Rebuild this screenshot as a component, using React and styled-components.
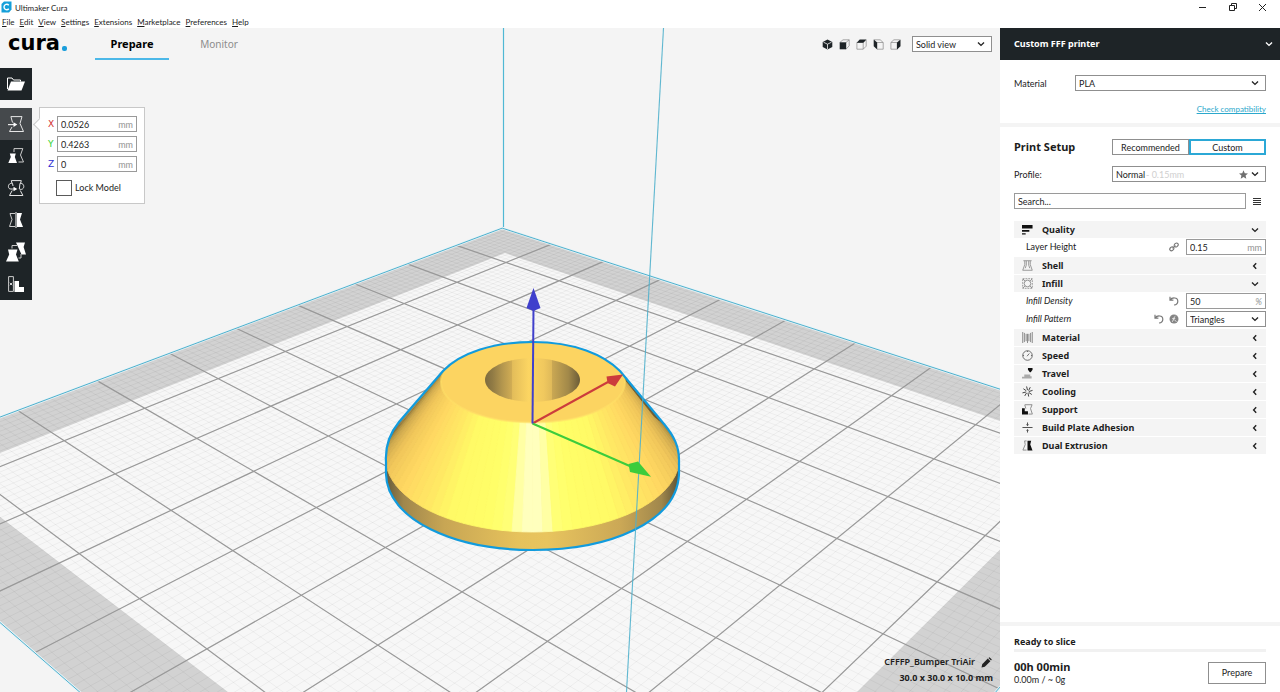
import React, { useState } from "react";
import styled, { createGlobalStyle } from "styled-components";

const GlobalStyle = createGlobalStyle`
	* {
		box-sizing: border-box;
	}
	html,
	body,
	#root {
		height: 100%;
		margin: 0;
	}
	body,
	button,
	input,
	select {
		font-family: Lato, "Noto Sans", sans-serif;
		font-size: 9px;
		line-height: 12px;
		color: #1c1c1c;
	}
	button,
	input,
	select {
		margin: 0;
		padding: 0;
		border: 0;
		background: none;
		border-radius: 0;
	}
	svg {
		display: block;
		flex: none;
	}
`;

// Window frame
const Window = styled.div`
	display: flex;
	flex-direction: column;
	height: 100vh;
	background: #fff;
	overflow: hidden;
`;

const TitleBar = styled.header`
	display: flex;
	align-items: center;
	height: 14px;
	padding: 0 12px 0 1px;
	gap: 3px;
`;

const WindowTitle = styled.span`
	flex: 1;
	padding-top: 2px;
	font-size: 8px;
`;

const WindowControls = styled.div`
	display: flex;
	gap: 18px;
`;

const WindowButton = styled.button`
	width: 12px;
	height: 12px;
`;

const MenuBar = styled.nav`
	display: flex;
	align-items: center;
	height: 14px;
	padding: 2px 2px 0;
	gap: 5px;
`;

const MenuItem = styled.button`
	font-size: 8px;

	&::first-letter {
		text-decoration: underline;
	}
`;

const Main = styled.div`
	flex: 1;
	display: flex;
	min-height: 0;
`;

// 3D view
const Viewport = styled.main`
	position: relative;
	flex: 1;
	min-width: 0;
	display: flex;
	flex-direction: column;
	background: #f4f4f4;
	overflow: hidden;
`;

const SceneSvg = styled.svg`
	position: absolute;
	inset: 0;
	width: 100%;
	height: 100%;
`;

const TopBar = styled.div`
	position: relative;
	display: flex;
	align-items: center;
	height: 32px;
	padding: 0 8px;
`;

const Logo = styled.div`
	display: flex;
	align-items: center;
	width: 87px;
	font-family: "DejaVu Sans", sans-serif;
	font-size: 21px;
	line-height: 24px;
	font-weight: 700;
	color: #000;
	height: 32px;
	padding-bottom: 2px;
`;

const LogoDot = styled.span`
	width: 5px;
	height: 5px;
	margin: 10px 0 0 2px;
	border-radius: 2px;
	background: #1b9edb;
`;

const Tab = styled.button`
	width: 74px;
	height: 32px;
	margin-right: 13px;
	padding-top: 2px;
	border-bottom: 2px solid ${(props) => (props.$active ? "#4cb8e8" : "transparent")};
	font-family: "Noto Sans", sans-serif;
	font-size: ${(props) => (props.$active ? "11px" : "10px")};
	font-weight: ${(props) => (props.$active ? 700 : 400)};
	color: ${(props) => (props.$active ? "#000" : "#8c8c8c")};
`;

const CameraButtons = styled.div`
	display: flex;
	gap: 5px;
	margin: 0 11px 0 auto;
`;

const CameraButton = styled.button`
	width: 12px;
	height: 12px;
	display: flex;
	align-items: center;
	justify-content: center;
`;

const Workspace = styled.div`
	position: relative;
	flex: 1;
	display: flex;
	align-items: flex-start;
	padding-top: 8px;
	gap: 7px;
`;

const Toolbar = styled.div`
	display: flex;
	flex-direction: column;
	gap: 8px;
`;

const ToolGroup = styled.div`
	display: flex;
	flex-direction: column;
	background: #1e2427;
`;

const ToolButton = styled.button`
	display: flex;
	align-items: center;
	justify-content: center;
	width: 32px;
	height: 32px;
	background: ${(props) => (props.$active ? "#45494c" : "transparent")};
`;

const ToolPanel = styled.form`
	position: relative;
	width: 106px;
	margin-top: 39px;
	padding: 8px 8px 7px;
	border: 1px solid #c8c8c8;
	background: #fff;
	display: flex;
	flex-direction: column;
	gap: 4px;

	&::before {
		content: "";
		position: absolute;
		left: -5px;
		top: 12px;
		width: 8px;
		height: 8px;
		border-left: 1px solid #c8c8c8;
		border-bottom: 1px solid #c8c8c8;
		background: #fff;
		transform: rotate(45deg);
	}
`;

const AxisRow = styled.label`
	display: grid;
	grid-template-columns: 9px 80px;
	align-items: center;
	font-family: "DejaVu Sans", sans-serif;
	color: ${(props) => props.$color};
`;

const CheckRow = styled.label`
	display: flex;
	align-items: center;
	gap: 3px;
	margin: 4px 0 0 8px;

	input {
		appearance: none;
		width: 16px;
		height: 16px;
		border: 1px solid #5a5a5a;
		background: #fff;
	}
`;

const ModelInfo = styled.div`
	position: relative;
	align-self: flex-end;
	margin-left: auto;
	padding: 0 7px 7px 0;
	display: flex;
	flex-direction: column;
	align-items: flex-end;
	gap: 2px;
	font-family: "Noto Sans", sans-serif;
	font-weight: 700;
	line-height: 14px;
`;

const JobName = styled.button`
	display: flex;
	align-items: center;
	gap: 6px;
	padding-right: 1px;
	font-family: inherit;
	font-weight: 600;
	line-height: 14px;
`;

// Form fields shared by both sides
const Field = styled.span`
	display: flex;
	align-items: center;
	height: 16px;
	padding: 1px 3px 0;
	border: 1px solid #9a9a9a;
	background: #fff;

	input {
		flex: 1;
		min-width: 0;
		outline: none;
	}
	input::placeholder {
		color: #1c1c1c;
		opacity: 1;
	}
`;

const Unit = styled.span`
	font-family: Lato, sans-serif;
	color: #929292;
`;

const SelectWrap = styled.span`
	position: relative;
	display: flex;
	height: 16px;
	width: ${(props) => props.$width || "auto"};

	select {
		appearance: none;
		flex: 1;
		min-width: 0;
		padding: 1px 3px 0;
		border: 1px solid #8f8f8f;
		background: #fff;
	}
`;

const SelectIcons = styled.span`
	position: absolute;
	right: 7px;
	top: 4px;
	display: flex;
	gap: 3px;
	pointer-events: none;
`;

const SelectHint = styled.span`
	position: absolute;
	left: 34px;
	top: 3px;
	color: #cfcfcf;
	pointer-events: none;
`;

// Sidebar
const Sidebar = styled.aside`
	width: 280px;
	display: flex;
	flex-direction: column;
	background: #fff;
`;

const Bold = styled.span`
	display: block;
	font-family: "Noto Sans", sans-serif;
	font-size: ${(props) => props.$size || "9px"};
	line-height: 14px;
	font-weight: 700;
`;

const MachineButton = styled.button`
	display: flex;
	align-items: center;
	justify-content: space-between;
	height: 32px;
	padding: 0 7px 0 14px;
	background: #1e2427;
	color: #fff;
`;

const MaterialSection = styled.section`
	display: flex;
	flex-direction: column;
	gap: 12px;
	padding: 15px 14px 8px;
	border-bottom: 4px solid #f4f4f4;
`;

const Row = styled.div`
	display: grid;
	grid-template-columns: ${(props) => props.$label} 1fr;
	align-items: center;
`;

const RowLabel = styled.span`
	padding-top: 1px;
`;

const CheckLink = styled.a`
	align-self: flex-end;
	font-size: 8px;
	color: #2ba8cc;
`;

const SetupSection = styled.section`
	flex: 1;
	display: flex;
	flex-direction: column;
	gap: 11px;
	padding: 12px 14px;
`;

const ModeSwitch = styled.div`
	display: grid;
	grid-template-columns: 1fr 1fr;
`;

const ModeButton = styled.button`
	height: 16px;
	border: ${(props) => (props.$active ? "2px solid #2ba8d6" : "1px solid #8f8f8f")};
	line-height: 11px;
`;

const SearchRow = styled.div`
	display: grid;
	grid-template-columns: 1fr 13px;
	gap: 7px;
	align-items: center;
`;

const MenuButton = styled.button`
	display: grid;
	gap: 1px;
	width: 8px;

	span {
		height: 1px;
		background: #333;
	}
`;

const SettingList = styled.div`
	display: flex;
	flex-direction: column;
	margin-top: 1px;
`;

const Category = styled.button`
	display: grid;
	grid-template-columns: 12px 1fr 8px;
	gap: 8px;
	align-items: center;
	height: 17px;
	margin-bottom: 1px;
	padding: 0 7px 0 8px;
	background: #f4f4f4;
	text-align: left;
`;

const Setting = styled.div`
	display: grid;
	grid-template-columns: 1fr auto 80px;
	gap: 7px;
	align-items: center;
	height: 18px;
	padding: 0 0 2px 12px;
	font-style: ${(props) => (props.$changed ? "italic" : "normal")};
`;

const SettingIcons = styled.span`
	display: flex;
	gap: 5px;
`;

const JobSection = styled.footer`
	padding: 9px 14px 7px;
	border-top: 4px solid #f4f4f4;
`;

const ProgressTrack = styled.div`
	height: 3px;
	margin-bottom: 8px;
	background: #f1f1f1;
`;

const JobRow = styled.div`
	display: flex;
	justify-content: space-between;
	align-items: center;
`;

const JobStats = styled.div`
	display: flex;
	flex-direction: column;
	line-height: 11px;
`;

const PrepareButton = styled.button`
	width: 58px;
	height: 22px;
	border: 1px solid #8f8f8f;
`;

// Icons
const Chevron = ({ color = "#222", left }) => (
	<svg width="8" height="8" viewBox="0 0 8 8" fill="none" stroke={color} strokeWidth="1.4">
		<path d={left ? "M5.2 1.2 2.6 4l2.6 2.8" : "M1 2.6 4 5.4l3-2.8"} />
	</svg>
);

const AppIcon = () => (
	<svg width="11" height="12" viewBox="0 0 11 12">
		<path d="M3 0.5h7.5v8L8 11.5H0.5V3z" fill="#159fd9" />
		<path d="M7.8 4.2C6.4 2.6 3 3 3 6s3.4 3.4 4.8 1.8" fill="none" stroke="#fff" strokeWidth="1.4" />
	</svg>
);

const Pencil = () => (
	<svg width="11" height="11" viewBox="0 0 11 11" fill="#222">
		<path d="M0.5 10.5 1.2 7.2 6.8 1.6 9.4 4.2 3.8 9.8zM7.5 1 8.5 0.2 10.8 2.4 10 3.5z" />
	</svg>
);

const Undo = () => (
	<svg width="10" height="10" viewBox="0 0 10 10" fill="none" stroke="#777" strokeWidth="1.2">
		<path d="M1 0.8v3.4h3.4M1.2 4C2.8 1.2 8.8 1 8.8 5.2c0 2.2-1.6 3.6-3.8 3.8" />
	</svg>
);

const LinkIcon = () => (
	<svg width="10" height="10" viewBox="0 0 10 10" fill="none" stroke="#777" strokeWidth="1.1">
		<ellipse cx="2.8" cy="6.8" rx="2.2" ry="1.7" transform="rotate(-40 2.8 6.8)" />
		<ellipse cx="7.2" cy="3" rx="2.2" ry="1.7" transform="rotate(-40 7.2 3)" />
		<path d="M3.4 6.200 6.600 3.600" />
	</svg>
);

const FormulaIcon = () => (
	<svg width="10" height="10" viewBox="0 0 10 10">
		<circle cx="5" cy="5" r="4.5" fill="#858585" />
		<path d="M3 7.8c1.5 0 1.6-5.6 3.4-5.6M3.2 4.6h3M5.4 5.6l2 2.2" stroke="#e4e4e4" fill="none" />
	</svg>
);

const Star = () => (
	<svg width="9" height="9" viewBox="0 0 10 10" fill="#6f6f6f">
		<path d="M5 0.2 6.4 3.5 10 3.8 7.3 6.2 8.1 9.7 5 7.8 1.9 9.7 2.7 6.2 0 3.8 3.6 3.5z" />
	</svg>
);

const cameraViews = {
	"3D View": (
		<g>
			<path d="M5.5 0.5 10.3 2.9v5.2L5.5 10.5 0.7 8.1V2.9z" fill="#1e2427" />
			<path d="M1.5 3.2l4 2 4-2M5.5 5.2V10" stroke="#f4f4f4" strokeWidth="0.8" fill="none" />
		</g>
	),
	"Front View": (
		<g>
			<path d="M0.8 3.5 4 0.8h6.2v6L7 10.2M7 3.5 10.2 0.8" stroke="#888" strokeWidth="0.7" fill="none" />
			<path d="M0.7 3.3h6.5v7H0.7z" fill="#1e2427" />
		</g>
	),
	"Top View": (
		<g>
			<path d="M0.9 3.5h6.3v6.7H0.9zM7.2 10.2l3-3V0.8" stroke="#888" strokeWidth="0.7" fill="none" />
			<path d="M0.7 3.7 3.7 0.5h6.8L7.4 3.7z" fill="#1e2427" />
		</g>
	),
	"Left View": (
		<g>
			<path d="M1 0.8h6.2l3 2.7v6.7H4M4 3.5h6.2" stroke="#888" strokeWidth="0.7" fill="none" />
			<path d="M0.7 0.5 4.2 3.5v7L0.7 7.2z" fill="#1e2427" />
		</g>
	),
	"Right View": (
		<g>
			<path d="M0.9 3.5h6.3v6.7H0.9zM0.9 3.5l3-2.7h6" stroke="#888" strokeWidth="0.7" fill="none" />
			<path d="M7 3.5 10.5 0.5v6.7L7 10.5z" fill="#1e2427" />
		</g>
	),
};

const tools = [
	{
		name: "Move",
		icon: (
			<g fill="none" stroke="#e6e6e6">
				<path d="M4.5 6.5 2.9 0.6H14L12 7.5l3.500 8H1.500l2.500-4.500" />
				<path d="M0 8.600h6" strokeWidth="1.200" />
				<path d="M5.500 6.300 9.300 8.600 5.500 10.900z" fill="#fff" stroke="none" />
			</g>
		),
	},
	{
		name: "Scale",
		icon: (
			<g>
				<path d="M6 4V0.6H14.8L12.5 7l3 7H10.500" fill="none" stroke="#ccc" />
				<path d="M1.800 5.500H7.800L6.800 9 9 15H0.300L2.800 9z" fill="#fff" />
			</g>
		),
	},
	{
		name: "Rotate",
		icon: (
			<g fill="none" stroke="#e6e6e6">
				<path d="M4 3.2 3.3 0.6H13.3L12.600 3.200M12.300 10.500l2.600 5H1.500L4.200 10.500" />
				<path d="M4.500 3.300C1 2.800-0.500 6 1 8.300 1.800 9.300 3.500 9 6 9M4.500 3.300 5 6M12 3.300c3.500-0.300 4.500 3 3.300 4.900-1 1.500-2.800 1.300-3.800 1M12 3.300 11.300 9" />
				<path d="M5.500 6.800 9.300 9 5.500 11.200z" fill="#fff" stroke="none" />
			</g>
		),
	},
	{
		name: "Mirror",
		icon: (
			<g>
				<path d="M7 1.500H2L4 7.500 1.500 14.500H7" fill="none" stroke="#ccc" />
				<path d="M8 0v16" stroke="#fff" />
				<path d="M9 1H14L12 7.500 15 15H9z" fill="#fff" />
			</g>
		),
	},
	{
		name: "Per Model Settings",
		icon: (
			<g>
				<path d="M8-1.500H17L15.600 3 18 10.500H13.500L10.500 4z" fill="#fff" />
				<path d="M4 4.500V1.500H9M13 10V14H10.500" fill="none" stroke="#ccc" />
				<path d="M0 5.500H9.500L8 10.500 10.800 17.500H-2L1.200 10.500z" fill="#fff" />
			</g>
		),
	},
	{
		name: "Support Blocker",
		icon: (
			<g>
				<path d="M0.600 0.600H5.400V15.400H0.600z" fill="none" stroke="#ccc" />
				<path d="M1.800 6.800l2.400 2.400M4.200 6.800 1.800 9.200" stroke="#fff" strokeWidth="0.800" />
				<path d="M6.500 5h4.500v6H16v5H6.500z" fill="#fff" />
			</g>
		),
	},
];

const categoryIcons = {
	Quality: <path d="M0 1h11.500v4H0zM0 6.500h8v2H0zM0 10h4v1.500H0z" fill="#111" />,
	Shell: (
		<g fill="none" stroke="#888" strokeWidth="0.9">
			<path d="M1.5 0.8h9M3 1v4L0.8 11.2h10.4L9 5V1M4.7 1v4.5L3.5 9M7.3 1v4.5L8.5 9" />
		</g>
	),
	Infill: (
		<g fill="none" stroke="#777" strokeWidth="0.8">
			<path d="M0.8 0.8h10.4v10.4H0.8z" strokeDasharray="2 1" />
			<circle cx="6" cy="6" r="3.600" />
			<path d="M1 1l2.500 2.500M11 1 8.500 3.500M1 11l2.500-2.500M11 11 8.500 8.500" />
		</g>
	),
	Material: (
		<path d="M0.8 0v12M2.6 1v10M4.5 2v8M6 2v10M7.5 2v8M9.4 1v10M11.2 0v12" fill="none" stroke="#777" strokeWidth="0.9" />
	),
	Speed: (
		<g fill="none" stroke="#555" strokeWidth="0.9">
			<circle cx="6" cy="6" r="5.2" />
			<path d="M5.5 6.8 8 3.8M6 1v1.2M1 6h1.2M9.8 6H11" />
		</g>
	),
	Travel: (
		<g>
			<path d="M6.5 0h5v2L9.5 4.5h-1L6.5 2z" fill="#111" />
			<path d="M2.500 7H9v2h1.500v2.500H0V9.500h2.500z" fill="#aaa" />
		</g>
	),
	Cooling: (
		<g fill="none" stroke="#333" strokeWidth="1">
			<path d="M6 4.500 5 0.500M7.200 5 9 1.300M7.500 6l4-1.200M7.300 7l3.400 2.300M6.500 7.500 7.300 11.500M5 7.500 3 10.800M4.500 6.500.5 7.500M4.700 5.200 1.500 3" />
		</g>
	),
	Support: (
		<g>
			<path d="M3 0.8h8L9.3 5l2 6H7M3 1l1.2 4" fill="none" stroke="#888" />
			<path d="M0 4.500h3V8h3.500v3.500H0z" fill="#111" />
		</g>
	),
	"Build Plate Adhesion": (
		<g fill="none" stroke="#444">
			<path d="M0.5 6h11M6 0.5V3M6 9v2.500" />
			<path d="M4.500 2.500h3L6 4.500zM4.500 9.500h3L6 7.500z" fill="#444" stroke="none" />
		</g>
	),
	"Dual Extrusion": (
		<g>
			<path d="M5 1H2.800L3.500 5 1 11h4" fill="none" stroke="#888" />
			<path d="M6 0.8h4L9 5l2.500 6.500H6z" fill="#111" />
		</g>
	),
};

// Build plate: ten cells each way, seen in perspective
const plateQuad = [
	[506, 262.5],
	[975.7, 424.7],
	[561, 764.5],
	[64.3, 440.7],
];

// Maps cell coordinates (a down the left side, b down the right side) to the screen
const makeProjection = ([p0, p1, p2, p3]) => {
	const dx1 = p1[0] - p2[0];
	const dx2 = p3[0] - p2[0];
	const dy1 = p1[1] - p2[1];
	const dy2 = p3[1] - p2[1];
	const sx = p0[0] - p1[0] + p2[0] - p3[0];
	const sy = p0[1] - p1[1] + p2[1] - p3[1];
	const den = dx1 * dy2 - dx2 * dy1;
	const g = (sx * dy2 - dx2 * sy) / den;
	const h = (dx1 * sy - sx * dy1) / den;
	return (a, b) => {
		const u = (b - 1) / 7;
		const v = (a - 1) / 7;
		const w = g * u + h * v + 1;
		return [0, 1].map((i) =>
			(((p1[i] - p0[i] + g * p1[i]) * u + (p3[i] - p0[i] + h * p3[i]) * v + p0[i]) / w).toFixed(2)
		);
	};
};

const project = makeProjection(plateQuad);
const line = (a1, b1, a2, b2) => `M${project(a1, b1)}L${project(a2, b2)}`;
const quad = (min, max) =>
	`M${project(min, min)}L${project(min, max)}L${project(max, max)}L${project(max, min)}Z`;

const gridLines = (step) => {
	let d = "";
	for (let i = 0; i <= 10 / step; i++) {
		const t = i * step;
		d += line(t, 0, t, 10) + line(0, t, 10, t);
	}
	return d;
};

// Shade of the cone wall by angle away from the viewer
const wallShades = [
	[0, [255, 255, 196]],
	[5, [255, 255, 178]],
	[9, [255, 255, 120]],
	[16, [255, 255, 104]],
	[34, [255, 250, 102]],
	[46, [255, 232, 100]],
	[62, [255, 216, 98]],
	[80, [240, 198, 90]],
	[96, [204, 168, 78]],
	[110, [150, 124, 64]],
	[125, [100, 84, 50]],
];

const wallColor = (angle) => {
	const t = Math.abs(angle);
	const i = Math.max(1, wallShades.findIndex(([stop]) => stop >= t));
	const [t0, c0] = wallShades[i - 1];
	const [t1, c1] = wallShades[i];
	const k = (t - t0) / (t1 - t0);
	return `rgb(${c0.map((c, n) => Math.round(c + (c1[n] - c) * k)).join(",")})`;
};

const onEllipse = (cx, cy, rx, ry, angle) => {
	const t = (angle * Math.PI) / 180;
	return `${(cx + rx * Math.sin(t)).toFixed(2)},${(cy + ry * Math.cos(t)).toFixed(2)}`;
};

const WALL_STEP = 4;
const wallFacets = [];
for (let angle = -124; angle < 124; angle += WALL_STEP) {
	wallFacets.push({
		color: wallColor(angle + WALL_STEP / 2),
		points: [
			onEllipse(533, 382, 92, 40, angle),
			onEllipse(533, 382, 92, 40, angle + WALL_STEP),
			onEllipse(532.5, 458, 147, 74, angle + WALL_STEP),
			onEllipse(532.5, 458, 147, 74, angle),
		].join(" "),
	});
}

const bodyOutline =
	"M533 342C575 342 604 355 620 371L664 424C674 436 679.5 447 679 462V474C677 522 610 550 533 550C455 550 387 520 386 474V462C385 447 390 433 399 422L443 371C460 353 493 342 533 342Z";

const Scene = () => (
	<SceneSvg viewBox="0 28 1000 664" preserveAspectRatio="xMidYMid slice" aria-label="Build plate">
		<defs>
			<clipPath id="body">
				<path d={bodyOutline} />
			</clipPath>
			<linearGradient id="rim">
				<stop offset="0" stopColor="#665a3a" />
				<stop offset="0.06" stopColor="#a0874c" />
				<stop offset="0.2" stopColor="#c8a654" />
				<stop offset="0.45" stopColor="#e6c25c" />
				<stop offset="0.55" stopColor="#e8c45e" />
				<stop offset="0.8" stopColor="#cba856" />
				<stop offset="0.94" stopColor="#a0874c" />
				<stop offset="1" stopColor="#5c5236" />
			</linearGradient>
			<linearGradient id="hole">
				<stop offset="0" stopColor="#7d6b3e" />
				<stop offset="0.08" stopColor="#917b45" />
				<stop offset="0.18" stopColor="#b3964e" />
				<stop offset="0.28" stopColor="#d0ac54" />
				<stop offset="0.29" stopColor="#e3bd5a" />
				<stop offset="0.46" stopColor="#fcd562" />
				<stop offset="0.62" stopColor="#f0c85e" />
				<stop offset="0.7" stopColor="#e0ba5a" />
				<stop offset="0.71" stopColor="#c9a753" />
				<stop offset="0.88" stopColor="#a18849" />
				<stop offset="1" stopColor="#6b5c38" />
			</linearGradient>
		</defs>

		<path d={quad(0, 10)} fill="#d2d2d2" />
		<path d={quad(0.74, 9.2)} fill="#f7f7f7" />
		<path d={gridLines(0.1)} stroke="#000" strokeOpacity="0.06" strokeWidth="0.8" />
		<path d={gridLines(1)} stroke="#999" strokeWidth="1.2" />
		<path d={quad(0, 10)} fill="none" stroke="#e8f4f8" strokeWidth="2.5" />
		<path d={quad(0, 10)} fill="none" stroke="#4fb0cc" strokeWidth="1" />
		<path d="M503.5 28V227" stroke="#4fb8d4" strokeWidth="1.2" />

		<g clipPath="url(#body)">
			<path d={bodyOutline} fill="url(#rim)" />
			{wallFacets.map((facet) => (
				<polygon key={facet.points} points={facet.points} fill={facet.color} stroke={facet.color} strokeWidth="0.8" />
			))}
			<ellipse cx="533" cy="382" rx="92" ry="40.5" fill="#fcd461" stroke="#ffe067" strokeOpacity="0.6" strokeWidth="2" />
			<ellipse cx="532.5" cy="380" rx="47.5" ry="22" fill="url(#hole)" />
		</g>
		<path d={bodyOutline} fill="none" stroke="#119bdd" strokeWidth="2.2" />
		<path d="M663.5 28 626.5 692" stroke="#4fb0cc" strokeOpacity="0.9" strokeWidth="1.1" />

		<g fill="none" strokeWidth="2">
			<path d="M532.5 423.5 608 382" stroke="#cc3c3c" />
			<path d="M532.5 423.5 632 467" stroke="#3ccc3c" />
			<path d="M532.5 423.5 533.5 308" stroke="#4040cc" />
		</g>
		<path d="M606.5 376.5 623 374.5 615 386.5 607.5 383z" fill="#cc3c3c" />
		<path d="M638 461.5 651 476.7 630 472 628.5 464z" fill="#3ccc3c" />
		<path d="M533.5 288 540.5 308 533.5 311 526.5 308z" fill="#4040cc" />
	</SceneSvg>
);

const Select = ({ label, options, width, hint, star }) => (
	<SelectWrap $width={width}>
		<select aria-label={label}>
			{options.map((option) => (
				<option key={option}>{option}</option>
			))}
		</select>
		{hint && <SelectHint>{hint}</SelectHint>}
		<SelectIcons>
			{star && <Star />}
			<Chevron />
		</SelectIcons>
	</SelectWrap>
);

const menus = ["File", "Edit", "View", "Settings", "Extensions", "Marketplace", "Preferences", "Help"];

const axes = [
	{ name: "X", value: "0.0526", color: "#d22f2f" },
	{ name: "Y", value: "0.4263", color: "#2fd22f" },
	{ name: "Z", value: "0", color: "#2f2fd2" },
];

const CategoryRow = ({ name, open }) => (
	<Category aria-expanded={!!open}>
		<svg width="11" height="11" viewBox="0 0 12 12">
			{categoryIcons[name]}
		</svg>
		<Bold>{name}</Bold>
		<Chevron left={!open} />
	</Category>
);

const App = () => {
	const [position, setPosition] = useState(axes.map((axis) => axis.value));
	const [layerHeight, setLayerHeight] = useState("0.15");
	const [density, setDensity] = useState("50");

	const moveAxis = (index, value) =>
		setPosition(position.map((old, i) => (i === index ? value : old)));

	return (
		<Window>
			<GlobalStyle />
			<TitleBar>
				<AppIcon />
				<WindowTitle>Ultimaker Cura</WindowTitle>
				<WindowControls>
					<WindowButton aria-label="Minimize">
						<svg width="12" height="12" stroke="#222">
							<path d="M3 6.5h7" />
						</svg>
					</WindowButton>
					<WindowButton aria-label="Restore">
						<svg width="12" height="12" stroke="#222" fill="none">
							<path d="M3.5 4.5h5v5h-5zM5.5 4V2.5h5v5H9" />
						</svg>
					</WindowButton>
					<WindowButton aria-label="Close">
						<svg width="12" height="12" stroke="#222">
							<path d="M3 3l7 7M10 3 3 10" />
						</svg>
					</WindowButton>
				</WindowControls>
			</TitleBar>
			<MenuBar>
				{menus.map((menu) => (
					<MenuItem key={menu}>{menu}</MenuItem>
				))}
			</MenuBar>
			<Main>
				<Viewport>
					<Scene />
					<TopBar>
						<Logo>
							cura
							<LogoDot />
						</Logo>
						<Tab $active>Prepare</Tab>
						<Tab>Monitor</Tab>
						<CameraButtons>
							{Object.entries(cameraViews).map(([name, shape]) => (
								<CameraButton key={name} aria-label={name}>
									<svg width="11" height="11" viewBox="0 0 11 11">
										{shape}
									</svg>
								</CameraButton>
							))}
						</CameraButtons>
						<Select label="View mode" width="80px" options={["Solid view", "X-Ray view", "Layer view"]} />
					</TopBar>
					<Workspace>
						<Toolbar>
							<ToolGroup>
								<ToolButton aria-label="Open File">
									<svg width="20" height="16" viewBox="0 0 20 16">
										<path d="M1.5 13V2h4.500l1.500 2H14.500v1.500" fill="none" stroke="#fff" />
										<path d="M5 5.500H19L15.500 14.500H1.500z" fill="#fff" />
									</svg>
								</ToolButton>
							</ToolGroup>
							<ToolGroup>
								{tools.map((tool, i) => (
									<ToolButton key={tool.name} aria-label={tool.name} $active={i === 0}>
										<svg width="16" height="16" viewBox="0 0 16 16" overflow="visible">
											{tool.icon}
										</svg>
									</ToolButton>
								))}
							</ToolGroup>
						</Toolbar>
						<ToolPanel>
							{axes.map((axis, i) => (
								<AxisRow key={axis.name} $color={axis.color}>
									{axis.name}
									<Field>
										<input value={position[i]} onChange={(e) => moveAxis(i, e.target.value)} />
										<Unit>mm</Unit>
									</Field>
								</AxisRow>
							))}
							<CheckRow>
								<input type="checkbox" />
								Lock Model
							</CheckRow>
						</ToolPanel>
						<ModelInfo>
							<JobName>
								CFFFP_Bumper TriAir
								<Pencil />
							</JobName>
							<span>30.0 x 30.0 x 10.0 mm</span>
						</ModelInfo>
					</Workspace>
				</Viewport>
				<Sidebar>
					<MachineButton>
						<Bold>Custom FFF printer</Bold>
						<Chevron color="#fff" />
					</MachineButton>
					<MaterialSection>
						<Row $label="61px">
							<RowLabel>Material</RowLabel>
							<Select label="Material" options={["PLA", "ABS", "PETG"]} />
						</Row>
						<CheckLink href="#compatibility">Check compatibility</CheckLink>
					</MaterialSection>
					<SetupSection>
						<Row $label="98px">
							<Bold $size="11px">Print Setup</Bold>
							<ModeSwitch>
								<ModeButton>Recommended</ModeButton>
								<ModeButton $active>Custom</ModeButton>
							</ModeSwitch>
						</Row>
						<Row $label="98px">
							<RowLabel>Profile:</RowLabel>
							<Select label="Profile" options={["Normal", "Fine", "Draft"]} hint="- 0.15mm" star />
						</Row>
						<SearchRow>
							<Field>
								<input aria-label="Search settings" placeholder="Search..." />
							</Field>
							<MenuButton aria-label="Setting visibility">
								<span />
								<span />
								<span />
								<span />
							</MenuButton>
						</SearchRow>
						<SettingList>
							<CategoryRow name="Quality" open />
							<Setting>
								<label htmlFor="layer-height">Layer Height</label>
								<LinkIcon />
								<Field>
									<input id="layer-height" value={layerHeight} onChange={(e) => setLayerHeight(e.target.value)} />
									<Unit>mm</Unit>
								</Field>
							</Setting>
							<CategoryRow name="Shell" />
							<CategoryRow name="Infill" open />
							<Setting $changed>
								<label htmlFor="infill-density">Infill Density</label>
								<Undo />
								<Field>
									<input id="infill-density" value={density} onChange={(e) => setDensity(e.target.value)} />
									<Unit>%</Unit>
								</Field>
							</Setting>
							<Setting $changed>
								<span>Infill Pattern</span>
								<SettingIcons>
									<Undo />
									<FormulaIcon />
								</SettingIcons>
								<Select label="Infill Pattern" options={["Triangles", "Grid", "Lines"]} />
							</Setting>
							<CategoryRow name="Material" />
							<CategoryRow name="Speed" />
							<CategoryRow name="Travel" />
							<CategoryRow name="Cooling" />
							<CategoryRow name="Support" />
							<CategoryRow name="Build Plate Adhesion" />
							<CategoryRow name="Dual Extrusion" />
						</SettingList>
					</SetupSection>
					<JobSection>
						<Bold>Ready to slice</Bold>
						<ProgressTrack />
						<JobRow>
							<JobStats>
								<Bold $size="11px">00h 00min</Bold>
								<span>0.00m / ~ 0g</span>
							</JobStats>
							<PrepareButton>Prepare</PrepareButton>
						</JobRow>
					</JobSection>
				</Sidebar>
			</Main>
		</Window>
	);
};

export default App;
